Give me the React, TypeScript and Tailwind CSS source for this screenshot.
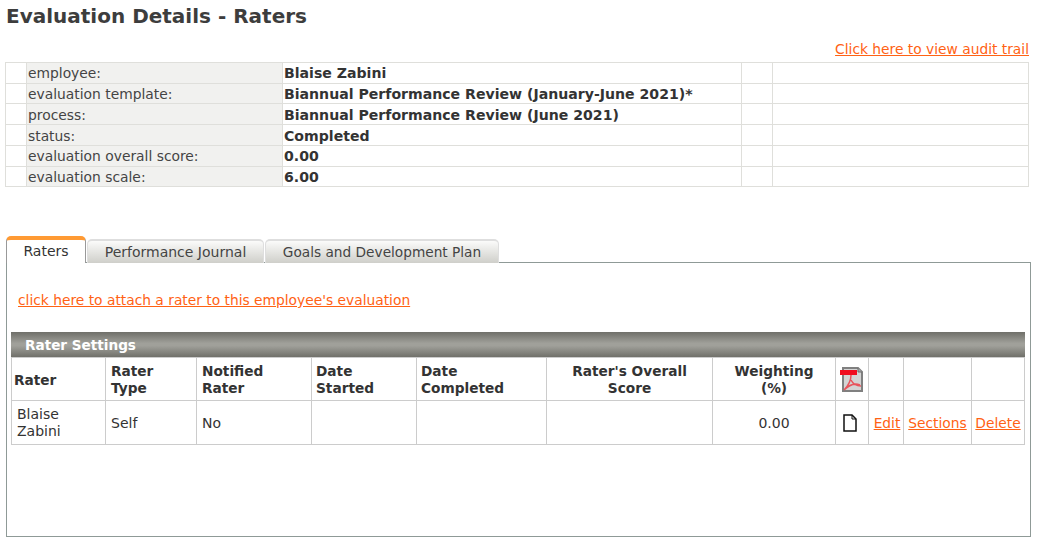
const summaryRows = [
  { label: 'employee:', value: 'Blaise Zabini', row: 'h-[21px]', nudge: '' },
  { label: 'evaluation template:', value: 'Biannual Performance Review (January-June 2021)*', row: 'h-[20px]', nudge: '' },
  { label: 'process:', value: 'Biannual Performance Review (June 2021)', row: 'h-[21px]', nudge: 'pt-[2px]' },
  { label: 'status:', value: 'Completed', row: 'h-[21px]', nudge: 'pt-[2px]' },
  { label: 'evaluation overall score:', value: '0.00', row: 'h-[21px]', nudge: '' },
  { label: 'evaluation scale:', value: '6.00', row: 'h-[20px]', nudge: 'pt-[1px]' },
];

const tabs = [
  { label: 'Performance Journal', className: 'w-[177px]' },
  { label: 'Goals and Development Plan', className: 'w-[234px] text-[13.7px]' },
];

const headCell = 'border border-[#cccccc] px-[5px] pt-[2px] pb-0 align-middle font-bold text-[13.7px]';
const bodyCell = 'border border-[#cccccc] px-[4px] py-0 align-middle';
const nudgedCell = 'border border-[#cccccc] px-[5px] pt-[2px] pb-0 align-middle';
const linkClass = 'text-[#ff6214] underline text-[13.8px]';

function PdfIcon() {
  return (
    <svg width="24" height="25" viewBox="0 0 24 25" className="block">
      <path d="M4 1H19L23 5V24H4Z" fill="#d4d4d4" stroke="#808080" strokeWidth="2" />
      <path d="M19 1V5H23" fill="#a8a8a8" stroke="#6f6f6f" />
      <rect x="1" y="3" width="17" height="5" fill="#f00d1f" />
      <path d="M12 8C12 14 9 19 5 23M12 13C14 17 18 19 22 19M5 23C10 18 16 16 21 18" fill="none" stroke="#e8545c" strokeWidth="1.5" />
    </svg>
  );
}

function FileIcon() {
  return (
    <svg width="14" height="18" viewBox="0 0 14 18" className="block">
      <path d="M1 1H9L13 5V17H1Z" fill="#ffffff" stroke="#111111" strokeWidth="1.5" />
      <path d="M9 1V5H13" fill="none" stroke="#111111" />
    </svg>
  );
}

export default function App() {
  return (
    <div className="h-[542px] w-[1039px] overflow-hidden bg-white font-['DejaVu_Sans','Liberation_Sans',sans-serif] text-[14px] text-[#333333]">
      <h1 className="pl-[6px] pt-[2px] text-[20px] leading-[28px] font-bold text-[#3d3d3d]">Evaluation Details - Raters</h1>

      <div className="mt-[10px] mr-[10px] text-right leading-[18px]">
        <a className={linkClass}>Click here to view audit trail</a>
      </div>

      <table className="mt-[4px] ml-[5px] w-[1024px] table-fixed border-collapse leading-[18px]">
        <colgroup>
          <col className="w-[21px]" />
          <col className="w-[256px]" />
          <col className="w-[459px]" />
          <col className="w-[31px]" />
          <col />
        </colgroup>
        <tbody>
          {summaryRows.map((item) => (
            <tr key={item.label} className={item.row}>
              <td className="border border-[#dfdfdb]" />
              <td className={`border border-[#dfdfdb] bg-[#f1f1ef] px-[1px] pb-0 text-[13.85px] text-[#444444] ${item.nudge}`}>{item.label}</td>
              <td className={`border border-[#dfdfdb] px-[1px] pb-0 text-[14.1px] font-bold text-[#333333] ${item.nudge}`}>{item.value}</td>
              <td className="border border-[#dfdfdb]" />
              <td className="border border-[#dfdfdb]" />
            </tr>
          ))}
        </tbody>
      </table>

      <div className="mt-[49px] ml-[6px] flex h-[27px] items-end gap-[1px]">
        <div className="relative z-10 flex h-[27px] w-[80px] items-center justify-center rounded-t-[5px] border-x border-[#999999] border-t-[4px] border-t-[#ff9a33] bg-white">
          Raters
        </div>
        {tabs.map((tab) => (
          <div
            key={tab.label}
            className={`flex h-[24px] ${tab.className} items-center justify-center rounded-t-[5px] border-x border-t-[2px] border-[#dedede] bg-gradient-to-b from-[#fbfbfa] to-[#cfcfca] text-[#444444]`}
          >
            {tab.label}
          </div>
        ))}
      </div>

      <div className="-mt-px ml-[6px] h-[275px] w-[1025px] border border-[#8f9a97] pr-[5px] pl-[4px]">
        <div className="pt-[28px] pl-[7px] leading-[18px]">
          <a className={linkClass}>click here to attach a rater to this employee's evaluation</a>
        </div>

        <div className="mt-[23px] flex h-[25px] w-[1014px] items-center bg-[linear-gradient(#6f6f69,#a0a09a_45%,#a0a09a_55%,#70706a)] pt-[1px] pl-[14px] text-[13.6px] font-bold text-white">
          Rater Settings
        </div>

        <table className="w-[1014px] table-fixed border-collapse leading-[17px]">
          <colgroup>
            <col className="w-[94px]" />
            <col className="w-[91px]" />
            <col className="w-[115px]" />
            <col className="w-[105px]" />
            <col className="w-[130px]" />
            <col className="w-[166px]" />
            <col className="w-[123px]" />
            <col className="w-[33px]" />
            <col className="w-[35px]" />
            <col className="w-[68px]" />
            <col />
          </colgroup>
          <tbody>
            <tr className="h-[43px]">
              <td className={`${headCell} !pl-[2px]`}>Rater</td>
              <td className={headCell}>Rater<br />Type</td>
              <td className={headCell}>Notified<br />Rater</td>
              <td className={`${headCell} !pl-[4px]`}>Date<br />Started</td>
              <td className={`${headCell} !pl-[4px]`}>Date<br />Completed</td>
              <td className={`${headCell} text-center`}>Rater's Overall<br />Score</td>
              <td className={`${headCell} text-center`}>Weighting<br />(%)</td>
              <td className="border border-[#cccccc] p-0 align-middle"><div className="flex justify-center pr-[2px]"><PdfIcon /></div></td>
              <td className={bodyCell} />
              <td className={bodyCell} />
              <td className={bodyCell} />
            </tr>
            <tr className="h-[44px]">
              <td className={`${bodyCell} !pl-[5px]`}>Blaise<br />Zabini</td>
              <td className={nudgedCell}>Self</td>
              <td className={nudgedCell}>No</td>
              <td className={bodyCell} />
              <td className={bodyCell} />
              <td className={bodyCell} />
              <td className={`${nudgedCell} text-center`}>0.00</td>
              <td className="border border-[#cccccc] p-0 align-middle"><div className="flex justify-center pr-[5px]"><FileIcon /></div></td>
              <td className={`${nudgedCell} !pr-0 !pl-[2px] text-center`}><a className={linkClass}>Edit</a></td>
              <td className={`${nudgedCell} !px-0 text-center`}><a className={linkClass}>Sections</a></td>
              <td className={`${nudgedCell} !px-0 text-center`}><a className={linkClass}>Delete</a></td>
            </tr>
          </tbody>
        </table>
      </div>
    </div>
  );
}
